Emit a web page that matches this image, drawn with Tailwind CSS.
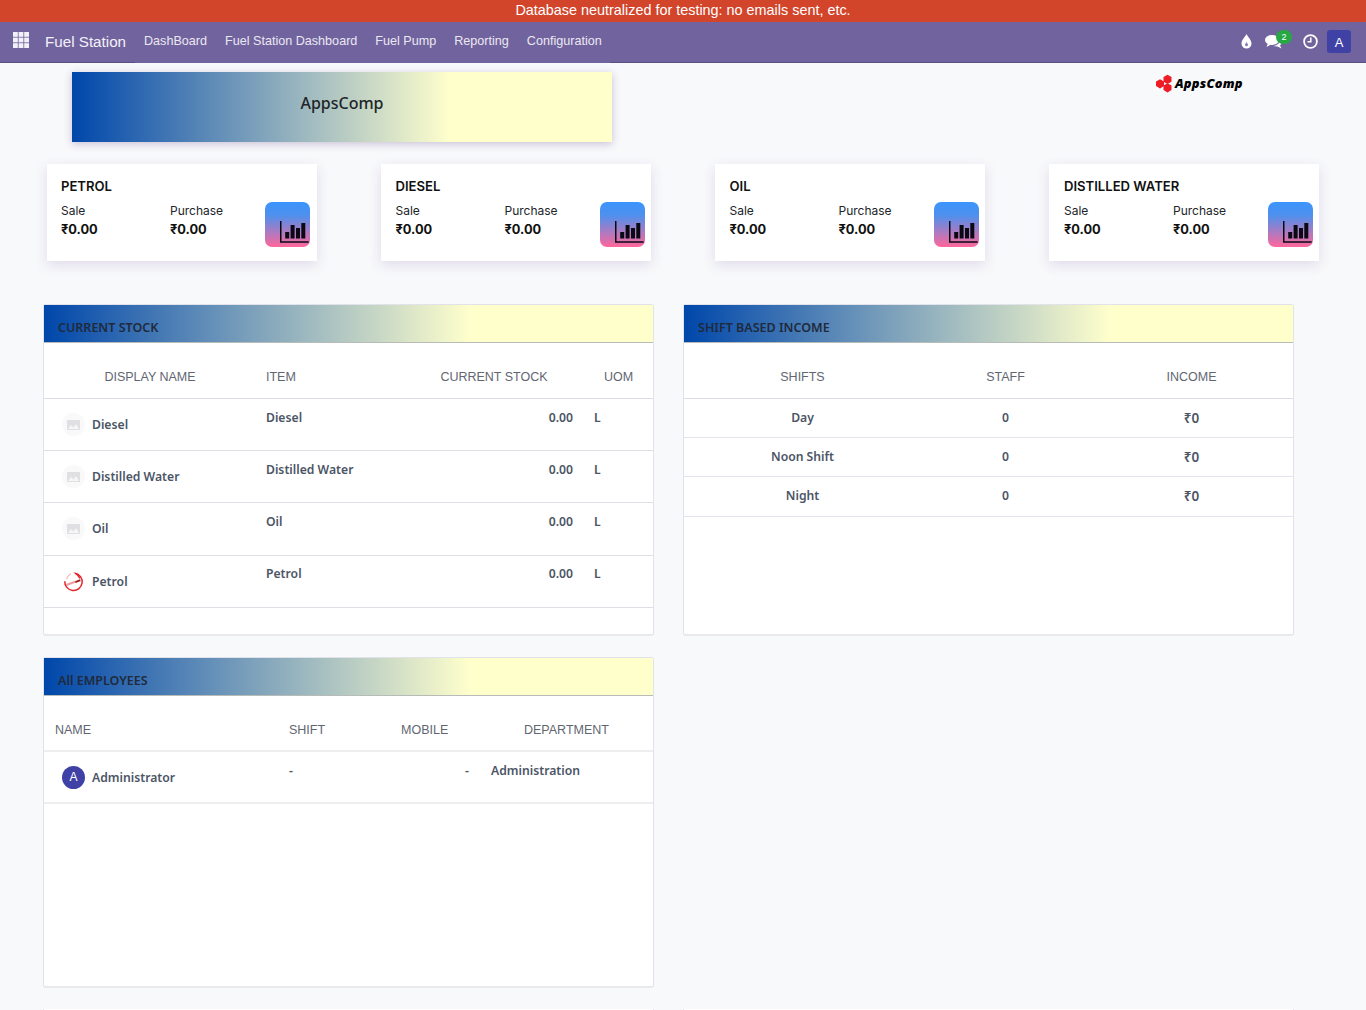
<!DOCTYPE html>
<html lang="en">
<head>
  <meta charset="UTF-8" />
  <title>Fuel Station</title>
  <script src="https://cdn.jsdelivr.net/npm/@tailwindcss/browser@4"></script>
</head>
<body class="bg-[#f8f9fb] h-[1010px] overflow-hidden font-['Liberation_Sans',sans-serif]">

  <!-- Neutralize banner -->
  <div class="h-[22px] bg-[#d2452b] text-white text-[14.4px] leading-[21px] text-center">Database neutralized for testing: no emails sent, etc.</div>

  <!-- Navbar -->
  <nav class="relative h-[41px] bg-[#71639e] border-b border-[#5d5083] flex items-center text-white">
    <svg class="ml-[13px] w-4 h-4 -mt-1" viewBox="0 0 16 16" fill="#f3f1f8">
      <rect x="0" y="0" width="4.8" height="4.8"/><rect x="5.600" y="0" width="4.8" height="4.8"/><rect x="11.200" y="0" width="4.8" height="4.8"/>
      <rect x="0" y="5.600" width="4.8" height="4.8"/><rect x="5.600" y="5.600" width="4.8" height="4.8"/><rect x="11.200" y="5.600" width="4.8" height="4.8"/>
      <rect x="0" y="11.200" width="4.8" height="4.8"/><rect x="5.600" y="11.200" width="4.8" height="4.8"/><rect x="11.200" y="11.200" width="4.8" height="4.8"/>
    </svg>
    <span class="ml-4 mt-[1px] w-[99px] text-[15.2px] text-[#f3f1f8]">Fuel Station</span>
    <div class="flex gap-[18px] text-[12.6px] text-[#ebe8f2] -mt-[2px]">
      <span>DashBoard</span>
      <span>Fuel Station Dashboard</span>
      <span>Fuel Pump</span>
      <span>Reporting</span>
      <span>Configuration</span>
    </div>
    <div class="ml-auto flex items-center mr-[15px] -mt-[2px]">
      <!-- droplet -->
      <svg class="-ml-px w-[11px] h-[15px]" viewBox="0 0 11 15"><path d="M5.500 0C7 3 10.500 6 10.500 9.600a5 5 0 0 1-10 0C.5 6 4 3 5.500 0z" fill="#fff"/><path d="M5.500 8C6 9.200 7 9.800 7 10.800a1.500 1.500 0 0 1-3 0C4 9.800 5 9.200 5.500 8z" fill="#8d80b8"/></svg>
      <!-- comments -->
      <div class="relative ml-[13px] w-[22px] h-[16px]">
        <svg class="w-[17px] h-[14px] absolute left-0 top-[2px]" viewBox="0 0 17 14"><ellipse cx="7" cy="5" rx="7" ry="5" fill="#fff"/><path d="M3 8 1.500 12 7 9z" fill="#fff"/><path d="M15.500 5.500c1.500 2 1 4-.5 5l1.500 3-4-2-5-.5c3 0 7-2 8-5.500z" fill="#fff"/></svg>
        <span class="absolute -top-[3px] left-[11px] w-4 h-[14px] rounded-full bg-[#28a745] text-[9px] leading-[14px] text-center text-white">2</span>
      </div>
      <!-- clock -->
      <svg class="ml-4 w-[15px] h-[15px]" viewBox="0 0 15 15" fill="none" stroke="#fff"><circle cx="7.500" cy="7.500" r="6.400" stroke-width="1.800"/><path d="M7.800 3.500v4.300H4.500" stroke-width="1.500"/></svg>
      <span class="ml-[9px] w-6 h-[23px] rounded-[3px] bg-[#3f41a5] text-[13px] leading-[25px] text-center text-white">A</span>
    </div>
    <!-- the menu strip hides the navbar's bottom line -->
    <span class="absolute left-[135px] -bottom-px w-[475px] h-px bg-[#71639e]"></span>
  </nav>

  <!-- Banner + logo -->
  <div class="relative h-[79px]">
    <div class="absolute left-[72px] top-[9px] w-[540px] h-[70px] pb-2 bg-[linear-gradient(90deg,#0047ab_0%,#ffffcc_70%)] shadow-[0_2px_8px_rgba(80,40,120,0.28)] flex items-center justify-center font-['Noto_Sans',sans-serif] font-medium text-[16px] text-[#212529]">AppsComp</div>
    <div class="absolute left-[1155px] top-[10px] flex items-center">
      <svg class="w-[18px] h-[19px]" viewBox="0 0 18 19" fill="#ee1c25">
        <polygon points="5,5.200 9,7.500 9,12.100 5,14.400 1,12.100 1,7.500"/>
        <polygon points="12.500,0.800 16.500,3.100 16.500,7.700 12.500,10 8.500,7.700 8.500,3.100"/>
        <polygon points="12.500,9.200 16.500,11.500 16.500,16.100 12.500,18.400 8.500,16.100 8.500,11.500"/>
      </svg>
      <span class="ml-[2px] mt-[1px] font-['Noto_Sans',sans-serif] font-black italic text-[12.8px] text-black tracking-[0.2px]">AppsComp</span>
    </div>
  </div>

  <!-- Stat cards -->
  <div class="mt-[22px] ml-[47px] flex gap-[64px]">

    <div class="w-[270px] h-[97px] bg-white shadow-[0_4px_12px_rgba(100,60,140,0.16)] pl-[14px] pt-[14px] font-['Inter',sans-serif] text-[#212529] relative">
      <div class="text-[13.1px] leading-[17px] font-semibold text-[#111]">PETROL</div>
      <div class="mt-[8px] grid grid-cols-[109px_1fr] text-[12px] leading-[15px]">
        <span>Sale</span><span>Purchase</span>
        <b class="mt-[3px] text-[12.8px] leading-[17px] font-bold text-[#111]">₹0.00</b><b class="mt-[3px] text-[12.8px] leading-[17px] font-bold text-[#111]">₹0.00</b>
      </div>
      <svg class="absolute right-[7px] top-[38px] w-[45px] h-[45px]" viewBox="0 0 45 45"><defs><linearGradient id="g1" x1="0" y1="0" x2="0" y2="1"><stop offset="0" stop-color="#3b95fd"/><stop offset="0.3" stop-color="#4f90ec"/><stop offset="1" stop-color="#ff669b"/></linearGradient></defs><rect width="45" height="45" rx="7" fill="url(#g1)"/><path d="M15 19h1.500v20.200h27.200v1.500H15zM20.200 30h4v6.500h-4zM25.600 23h4v13.500h-4zM31 26h4v10.500h-4zM36.300 21h4v15.500h-4z" fill="#0a0a14"/></svg>
    </div>

    <div class="w-[270px] h-[97px] bg-white shadow-[0_4px_12px_rgba(100,60,140,0.16)] pl-[14.5px] pt-[14px] font-['Inter',sans-serif] text-[#212529] relative">
      <div class="text-[13.1px] leading-[17px] font-semibold text-[#111]">DIESEL</div>
      <div class="mt-[8px] grid grid-cols-[109px_1fr] text-[12px] leading-[15px]">
        <span>Sale</span><span>Purchase</span>
        <b class="mt-[3px] text-[12.8px] leading-[17px] font-bold text-[#111]">₹0.00</b><b class="mt-[3px] text-[12.8px] leading-[17px] font-bold text-[#111]">₹0.00</b>
      </div>
      <svg class="absolute right-[6px] top-[38px] w-[45px] h-[45px]" viewBox="0 0 45 45"><rect width="45" height="45" rx="7" fill="url(#g1)"/><path d="M15 19h1.500v20.200h27.200v1.500H15zM20.200 30h4v6.500h-4zM25.600 23h4v13.500h-4zM31 26h4v10.500h-4zM36.300 21h4v15.500h-4z" fill="#0a0a14"/></svg>
    </div>

    <div class="w-[270px] h-[97px] bg-white shadow-[0_4px_12px_rgba(100,60,140,0.16)] pl-[14.5px] pt-[14px] font-['Inter',sans-serif] text-[#212529] relative">
      <div class="text-[13.1px] leading-[17px] font-semibold text-[#111]">OIL</div>
      <div class="mt-[8px] grid grid-cols-[109px_1fr] text-[12px] leading-[15px]">
        <span>Sale</span><span>Purchase</span>
        <b class="mt-[3px] text-[12.8px] leading-[17px] font-bold text-[#111]">₹0.00</b><b class="mt-[3px] text-[12.8px] leading-[17px] font-bold text-[#111]">₹0.00</b>
      </div>
      <svg class="absolute right-[6px] top-[38px] w-[45px] h-[45px]" viewBox="0 0 45 45"><rect width="45" height="45" rx="7" fill="url(#g1)"/><path d="M15 19h1.500v20.200h27.200v1.500H15zM20.200 30h4v6.500h-4zM25.600 23h4v13.500h-4zM31 26h4v10.500h-4zM36.300 21h4v15.500h-4z" fill="#0a0a14"/></svg>
    </div>

    <div class="w-[270px] h-[97px] bg-white shadow-[0_4px_12px_rgba(100,60,140,0.16)] pl-[15px] pt-[14px] font-['Inter',sans-serif] text-[#212529] relative">
      <div class="text-[13.1px] leading-[17px] font-semibold text-[#111]">DISTILLED WATER</div>
      <div class="mt-[8px] grid grid-cols-[109px_1fr] text-[12px] leading-[15px]">
        <span>Sale</span><span>Purchase</span>
        <b class="mt-[3px] text-[12.8px] leading-[17px] font-bold text-[#111]">₹0.00</b><b class="mt-[3px] text-[12.8px] leading-[17px] font-bold text-[#111]">₹0.00</b>
      </div>
      <svg class="absolute right-[6px] top-[38px] w-[45px] h-[45px]" viewBox="0 0 45 45"><rect width="45" height="45" rx="7" fill="url(#g1)"/><path d="M15 19h1.500v20.200h27.200v1.500H15zM20.200 30h4v6.500h-4zM25.600 23h4v13.500h-4zM31 26h4v10.500h-4zM36.300 21h4v15.500h-4z" fill="#0a0a14"/></svg>
    </div>

  </div>

  <!-- Panels -->
  <div class="mt-[43px] ml-[43px] grid grid-cols-[611px_611px] gap-x-[29px] gap-y-[21px] font-['Noto_Sans',sans-serif] text-[12.2px] font-semibold text-[#4c5566]">

    <!-- Current stock -->
    <section class="h-[332px] bg-white border border-[#e2e3ea] border-b-2 border-b-[#e9e9ec] rounded-[3px]">
      <h2 class="h-[38px] pl-[14px] pt-[14px] text-[12.5px] leading-[17px] font-semibold text-[#1f2a3c] bg-[linear-gradient(90deg,#0047ab_0%,#ffffcc_70%)] border-b border-[#b8bcb8]">CURRENT STOCK</h2>
      <div class="h-[56px] pt-[14px] grid grid-cols-[212px_150px_178px_1fr] items-center border-b border-[#dcdde6] font-['Liberation_Sans',sans-serif] font-normal text-[12.5px] text-[#5f6672]">
        <span class="text-center">DISPLAY NAME</span><span class="pl-[10px]">ITEM</span><span class="text-center -ml-[2px]">CURRENT STOCK</span><span class="text-center">UOM</span>
      </div>
      <div class="h-[52px] grid grid-cols-[212px_150px_167px_1fr] border-b border-[#dedfe5]">
        <div class="pl-[18px] mt-[14px] h-[23px] flex items-center"><span class="w-[23px] h-[23px] rounded-full bg-[#f9f9fa] flex items-center justify-center"><svg class="w-[13px] h-[10px]" viewBox="0 0 13 10"><path d="M0 0h13v10H0z" fill="#e0e0e3"/><path d="M1 9l3-4 2.500 2.500L9 4l3 5z" fill="#f6f6f7"/></svg></span><span class="ml-[7px] mt-[1px]">Diesel</span></div>
        <div class="pl-[10px] pt-[10px]">Diesel</div>
        <div class="pt-[10px] text-right">0.00</div>
        <div class="pl-[21px] pt-[10px]">L</div>
      </div>
      <div class="h-[52px] grid grid-cols-[212px_150px_167px_1fr] border-b border-[#dedfe5]">
        <div class="pl-[18px] mt-[14px] h-[23px] flex items-center"><span class="w-[23px] h-[23px] rounded-full bg-[#f9f9fa] flex items-center justify-center"><svg class="w-[13px] h-[10px]" viewBox="0 0 13 10"><path d="M0 0h13v10H0z" fill="#e0e0e3"/><path d="M1 9l3-4 2.500 2.500L9 4l3 5z" fill="#f6f6f7"/></svg></span><span class="ml-[7px] mt-[1px]">Distilled Water</span></div>
        <div class="pl-[10px] pt-[10px]">Distilled Water</div>
        <div class="pt-[10px] text-right">0.00</div>
        <div class="pl-[21px] pt-[10px]">L</div>
      </div>
      <div class="h-[53px] grid grid-cols-[212px_150px_167px_1fr] border-b border-[#dedfe5]">
        <div class="pl-[18px] mt-[14px] h-[23px] flex items-center"><span class="w-[23px] h-[23px] rounded-full bg-[#f9f9fa] flex items-center justify-center"><svg class="w-[13px] h-[10px]" viewBox="0 0 13 10"><path d="M0 0h13v10H0z" fill="#e0e0e3"/><path d="M1 9l3-4 2.500 2.500L9 4l3 5z" fill="#f6f6f7"/></svg></span><span class="ml-[7px] mt-[1px]">Oil</span></div>
        <div class="pl-[10px] pt-[10px]">Oil</div>
        <div class="pt-[10px] text-right">0.00</div>
        <div class="pl-[21px] pt-[10px]">L</div>
      </div>
      <div class="h-[52px] grid grid-cols-[212px_150px_167px_1fr] border-b border-[#dedfe5]">
        <div class="pl-[18px] mt-[14px] h-[23px] flex items-center"><svg class="w-[23px] h-[23px]" viewBox="0 0 23 23" fill="none"><path d="M13 3.200a8.700 8.700 0 1 1-10.200 8" stroke="#e4252b" stroke-width="1.500"/><path d="M4.500 9.200A8 8 0 0 1 9 3.800" stroke="#f3a5a8" stroke-width="1"/><path d="M4 14 13 10.800l.6 1.900-9 3.200z" fill="#f29a9d"/><path d="M13 11.200l5-1.900.7 1.800-5 1.900z" fill="#9a1b20"/><path d="M11 2l5 2 2.500 4-1.200.8L15 5.500z" fill="#e4252b"/></svg><span class="ml-[7px] mt-[1px]">Petrol</span></div>
        <div class="pl-[10px] pt-[9px]">Petrol</div>
        <div class="pt-[9px] text-right">0.00</div>
        <div class="pl-[21px] pt-[9px]">L</div>
      </div>
    </section>

    <!-- Shift based income -->
    <section class="h-[332px] bg-white border border-[#e2e3ea] border-b-2 border-b-[#e9e9ec] rounded-[3px]">
      <h2 class="h-[38px] pl-[14px] pt-[14px] text-[12.5px] leading-[17px] font-semibold text-[#1f2a3c] bg-[linear-gradient(90deg,#0047ab_0%,#ffffcc_70%)] border-b border-[#b8bcb8]">SHIFT BASED INCOME</h2>
      <div class="h-[56px] pt-[14px] grid grid-cols-[237px_169px_1fr] items-center text-center border-b border-[#dcdde6] font-['Liberation_Sans',sans-serif] font-normal text-[12.5px] text-[#5f6672]">
        <span>SHIFTS</span><span>STAFF</span><span>INCOME</span>
      </div>
      <div class="h-[39px] grid grid-cols-[237px_169px_1fr] items-center text-center border-b border-[#e4e5ec]"><span>Day</span><span>0</span><span class="text-[13.5px]">₹0</span></div>
      <div class="h-[39px] grid grid-cols-[237px_169px_1fr] items-center text-center border-b border-[#e4e5ec]"><span>Noon Shift</span><span>0</span><span class="text-[13.5px]">₹0</span></div>
      <div class="h-[40px] grid grid-cols-[237px_169px_1fr] items-center text-center border-b border-[#e4e5ec]"><span>Night</span><span>0</span><span class="text-[13.5px]">₹0</span></div>
    </section>

    <!-- All employees -->
    <section class="h-[331px] bg-white border border-[#e2e3ea] border-b-2 border-b-[#e9e9ec] rounded-[3px]">
      <h2 class="h-[38px] pl-[14px] pt-[14px] text-[12.5px] leading-[17px] font-semibold text-[#1f2a3c] bg-[linear-gradient(90deg,#0047ab_0%,#ffffcc_70%)] border-b border-[#b8bcb8]">All EMPLOYEES</h2>
      <div class="h-[56px] pt-[14px] grid grid-cols-[245px_112px_123px_1fr] items-center border-b-2 border-[#eeeef0] font-['Liberation_Sans',sans-serif] font-normal text-[12.5px] text-[#5f6672]">
        <span class="pl-[11px]">NAME</span><span>SHIFT</span><span>MOBILE</span><span>DEPARTMENT</span>
      </div>
      <div class="h-[52px] grid grid-cols-[245px_176px_1fr] border-b-2 border-[#eeeef0]">
        <div class="pl-[18px] mt-[14px] h-[23px] flex items-center"><span class="w-[23px] h-[23px] rounded-full bg-[#3f41a5] text-white text-center text-[12px] leading-[23px] font-normal font-['Liberation_Sans',sans-serif]">A</span><span class="ml-[7px] mt-[1px]">Administrator</span></div>
        <div class="pt-[10px]">-</div>
        <div class="pt-[10px] flex"><span class="w-[26px]">-</span><span>Administration</span></div>
      </div>
    </section>

    <div></div>

    <!-- next row, cut off by the window -->
    <div class="h-[3px] bg-white border-x border-[#e2e3ea]"></div>
    <div class="h-[3px] bg-white border-x border-[#e2e3ea]"></div>
  </div>

</body>
</html>
